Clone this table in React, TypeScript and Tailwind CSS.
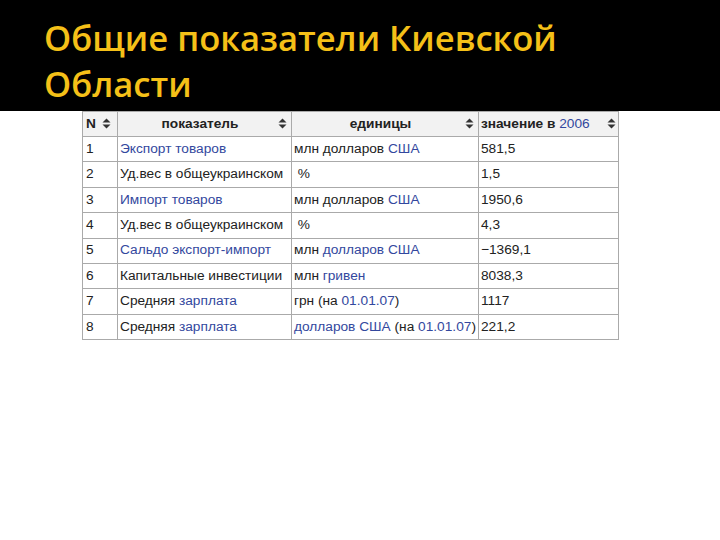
import React from "react";

const L = "text-[#33489e]";

function SortIcon() {
  return (
    <svg width="9" height="11" viewBox="0 0 9 11" className="inline-block shrink-0">
      <path d="M4.5 0.5 L8.5 4.5 L0.5 4.5 Z" fill="#333" />
      <path d="M4.5 10.5 L8.5 6.5 L0.5 6.5 Z" fill="#333" />
    </svg>
  );
}

type Row = { n: string; name: React.ReactNode; unit: React.ReactNode; value: string };

const rows: Row[] = [
  { n: "1", name: <span className={L}>Экспорт товаров</span>, unit: <>млн долларов <span className={L}>США</span></>, value: "581,5" },
  { n: "2", name: "Уд.вес в общеукраинском", unit: <>&nbsp;%</>, value: "1,5" },
  { n: "3", name: <span className={L}>Импорт товаров</span>, unit: <>млн долларов <span className={L}>США</span></>, value: "1950,6" },
  { n: "4", name: "Уд.вес в общеукраинском", unit: <>&nbsp;%</>, value: "4,3" },
  { n: "5", name: <span className={L}>Сальдо экспорт-импорт</span>, unit: <>млн <span className={L}>долларов США</span></>, value: "−1369,1" },
  { n: "6", name: "Капитальные инвестиции", unit: <>млн <span className={L}>гривен</span></>, value: "8038,3" },
  { n: "7", name: <>Средняя <span className={L}>зарплата</span></>, unit: <>грн (на <span className={L}>01.01.07</span>)</>, value: "1117" },
  { n: "8", name: <>Средняя <span className={L}>зарплата</span></>, unit: <><span className={L}>долларов США</span> (на <span className={L}>01.01.07</span>)</>, value: "221,2" },
];

export default function App() {
  return (
    <div className="w-[720px] h-[540px] bg-white overflow-hidden">
      <div className="bg-black h-[111px] pl-[44px] pt-[15px]">
        <h1
          className="text-[#f5c018] text-[34.6px] leading-[46px] font-semibold"
          style={{ fontFamily: '"Open Sans", "Noto Sans", sans-serif' }}
        >
          Общие показатели Киевской
          <br />
          Области
        </h1>
      </div>
      <div className="pl-[82px]">
        <table
          className="w-[536px] border-collapse border border-[#c8c8c8] text-[13.7px] text-[#222] table-fixed"
          style={{ fontFamily: '"Liberation Sans", Arial, sans-serif' }}
        >
          <colgroup>
            <col className="w-[35px]" />
            <col className="w-[174px]" />
            <col className="w-[187px]" />
            <col className="w-[140px]" />
          </colgroup>
          <thead>
            <tr className="h-[25px] bg-[#f2f2f2] font-bold">
              <th className="border border-[#aaa] px-[3px] text-left">
                <div className="flex items-center gap-[6px]">
                  N <SortIcon />
                </div>
              </th>
              <th className="border border-[#aaa] px-[4px]">
                <div className="flex items-center justify-between">
                  <span className="flex-1 text-center">показатель</span>
                  <SortIcon />
                </div>
              </th>
              <th className="border border-[#aaa] px-[4px]">
                <div className="flex items-center justify-between">
                  <span className="flex-1 text-center">единицы</span>
                  <SortIcon />
                </div>
              </th>
              <th className="border border-[#aaa] px-[2px]">
                <div className="flex items-center justify-between">
                  <span className="whitespace-nowrap">
                    значение в <span className={`${L} font-normal`}>2006</span>
                  </span>
                  <SortIcon />
                </div>
              </th>
            </tr>
          </thead>
          <tbody>
            {rows.map((r) => (
              <tr key={r.n} className="h-[25.4px] bg-white">
                <td className="border border-[#aaa] px-[3px]">{r.n}</td>
                <td className="border border-[#aaa] px-[2px] whitespace-nowrap overflow-hidden">{r.name}</td>
                <td className="border border-[#aaa] px-[2px] whitespace-nowrap overflow-hidden">{r.unit}</td>
                <td className="border border-[#aaa] px-[2px]">{r.value}</td>
              </tr>
            ))}
          </tbody>
        </table>
      </div>
    </div>
  );
}
